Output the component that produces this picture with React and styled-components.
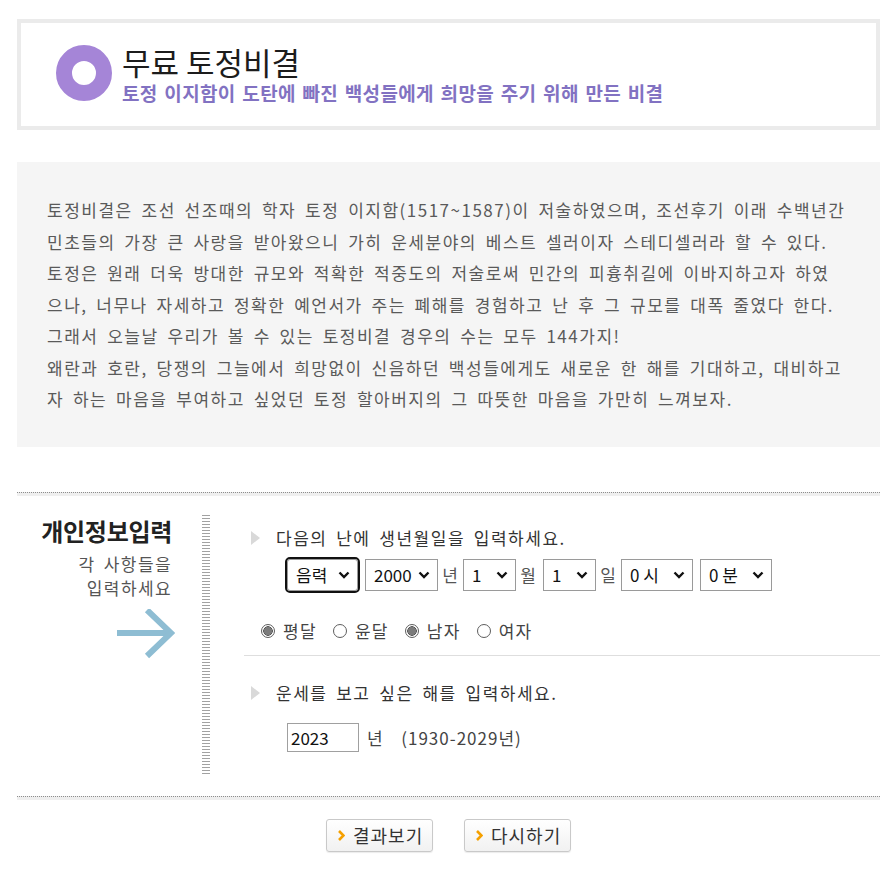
import React from "react";
import styled, { createGlobalStyle } from "styled-components";

const Global = createGlobalStyle`
  html, body { margin: 0; padding: 0; background: #fff; }
  body { font-family: "Noto Sans CJK KR", "Noto Sans", sans-serif; color: #333; }
  * { box-sizing: border-box; }
`;

const chevronSvg = encodeURIComponent(
  '<svg xmlns="http://www.w3.org/2000/svg" width="12" height="8" viewBox="0 0 12 8"><polyline points="1.5,1.5 6,6 10.5,1.5" fill="none" stroke="#111" stroke-width="2.4"/></svg>'
);

const Page = styled.div`
  width: 895px;
  padding: 19px 15px 20px 17px;
`;

const HeaderBox = styled.header`
  height: 111px;
  border: 4px solid #ebebeb;
  display: flex;
  align-items: center;
  padding-left: 35px;
  gap: 10px;
`;

const Ring = styled.div`
  width: 56px;
  height: 56px;
  border-radius: 50%;
  border: 16px solid #a585d7;
  margin-bottom: 4px;
  flex: none;
`;

const TitleBlock = styled.div`
  display: flex;
  flex-direction: column;
`;

const Title = styled.h1`
  margin: 0;
  font-size: 31px;
  line-height: 32px;
  font-weight: 400;
  color: #1c1c1c;
`;

const Subtitle = styled.p`
  margin: 4px 0 0;
  font-size: 19px;
  line-height: 22px;
  font-weight: 700;
  color: #8272c2;
  letter-spacing: 0.35px;
  word-spacing: 2px;
`;

const IntroBox = styled.section`
  margin-top: 32px;
  background: #f5f5f5;
  padding: 32px 0 32px 30px;
  font-size: 17px;
  line-height: 31.5px;
  letter-spacing: 1.5px;
  word-spacing: 3.5px;
  color: #5a5a5a;
`;

const Line = styled.span`
  display: block;
  white-space: nowrap;
`;

const Divider = styled.div`
  height: 4px;
  border-top: 1px dotted #8d8d8d;
  background: #efefef;
  margin-top: ${(p) => p.$top || 0}px;
`;

const FormRow = styled.div`
  display: flex;
  padding: 19px 0 20px;
`;

const SideCol = styled.div`
  width: 173px;
  padding-right: 18px;
  text-align: right;
  display: flex;
  flex-direction: column;
  align-items: flex-end;
`;

const SideTitle = styled.h2`
  margin: 1px 0 0;
  font-size: 24px;
  line-height: 30px;
  font-weight: 700;
  color: #222;
  letter-spacing: -0.3px;
`;

const SideText = styled.p`
  margin: 6px 0 0;
  font-size: 17px;
  line-height: 24px;
  letter-spacing: 1.4px;
  word-spacing: 3px;
  color: #555;
`;

const ArrowWrap = styled.div`
  margin-top: 9px;
  margin-right: -3px;
  width: 58px;
  height: 50px;
`;

const Stripes = styled.div`
  margin-left: 12px;
  width: 8px;
  height: 261px;
  background: repeating-linear-gradient(
    to bottom,
    #a2a2a2 0 1px,
    #ffffff 1px 3px
  );
  flex: none;
`;

const MainCol = styled.div`
  margin-left: 34px;
  flex: 1;
  display: flex;
  flex-direction: column;
`;

const Question = styled.div`
  display: flex;
  align-items: center;
  margin-top: ${(p) => p.$top}px;
  padding-left: 7px;
  height: 24px;
  font-size: 17px;
  letter-spacing: 1.5px;
  word-spacing: 3.5px;
  color: #333;
  gap: 16px;
`;

const Triangle = styled.span`
  width: 0;
  height: 0;
  border-left: 9px solid #d9d9d9;
  border-top: 7px solid transparent;
  border-bottom: 7px solid transparent;
`;

const FieldRow = styled.div`
  display: flex;
  align-items: center;
  margin-top: ${(p) => p.$top}px;
  padding-left: 43px;
  height: ${(p) => p.$h}px;
  font-size: 17px;
  color: #444;
`;

const Select = styled.select`
  appearance: none;
  width: ${(p) => p.$w}px;
  height: 32px;
  margin-right: ${(p) => p.$mr || 0}px;
  font-family: "Noto Sans CJK KR", sans-serif;
  font-size: 17px;
  color: #111;
  background: #fff url("data:image/svg+xml,${chevronSvg}") no-repeat right 7px center;
  border: 1px solid #9a9a9a;
  border-radius: ${(p) => (p.$focused ? "3px" : "0")};
  padding: 0 20px 0 8px;
  outline: ${(p) => (p.$focused ? "2px solid #111" : "none")};
  outline-offset: 0;
`;

const Unit = styled.span`
  width: 20px;
  text-align: center;
  margin: 0 ${(p) => p.$mr || 2}px 0 2px;
  color: #555;
  font-size: 17px;
`;

const RadioRow = styled.div`
  display: flex;
  align-items: center;
  margin-top: 28px;
  padding-left: 17px;
  height: 24px;
  font-size: 17px;
  letter-spacing: 1.3px;
  color: #444;
`;

const RadioLabel = styled.label`
  display: flex;
  align-items: center;
  gap: 8px;
  margin-right: 16px;
`;

const Radio = styled.input`
  appearance: none;
  margin: 0;
  width: 14px;
  height: 14px;
  border-radius: 50%;
  border: 1px solid #5e5e5e;
  background: ${(p) =>
    p.checked
      ? "radial-gradient(circle, #7b7b7b 0 3.8px, #555 4px 4.5px, #fff 5px)"
      : "#fff"};
`;

const Rule = styled.div`
  margin-top: 12px;
  height: 1px;
  background: #dedede;
`;

const YearInput = styled.input`
  width: 72px;
  height: 29px;
  border: 1px solid #a0a0a0;
  padding: 0 3px;
  font-family: "Noto Sans CJK KR", sans-serif;
  font-size: 17px;
  color: #111;
  margin-right: 8px;
`;

const Hint = styled.span`
  color: #444;
  letter-spacing: 1px;
  word-spacing: 4px;
`;

const Buttons = styled.div`
  display: flex;
  justify-content: center;
  gap: 31px;
  margin-top: 19px;
`;

const Button = styled.button`
  width: 107px;
  height: 33px;
  display: flex;
  align-items: center;
  gap: 8px;
  padding: 0 0 0 11px;
  border: 1px solid #c9c9c9;
  border-radius: 3px;
  background: linear-gradient(to bottom, #ffffff, #f1f1f1);
  box-shadow: 0 1px 1px rgba(0, 0, 0, 0.08);
  font-family: "Noto Sans CJK KR", sans-serif;
  font-size: 18px;
  letter-spacing: 1px;
  color: #333;
  cursor: pointer;
`;

const Chevron = () => (
  <svg width="7" height="11" viewBox="0 0 7 11">
    <polyline points="1,1 5.5,5.5 1,10" fill="none" stroke="#f5a000" strokeWidth="2.6" />
  </svg>
);

const Arrow = () => (
  <svg width="58" height="50" viewBox="0 0 58 50">
    <g stroke="#8ebdd3" strokeWidth="6" fill="none">
      <line x1="0" y1="24" x2="54" y2="24" />
      <polyline points="30,1 54,24 30,47" strokeLinejoin="miter" />
    </g>
  </svg>
);

const lines = [
  "토정비결은 조선 선조때의 학자 토정 이지함(1517~1587)이 저술하였으며, 조선후기 이래 수백년간",
  "민초들의 가장 큰 사랑을 받아왔으니 가히 운세분야의 베스트 셀러이자 스테디셀러라 할 수 있다.",
  "토정은 원래 더욱 방대한 규모와 적확한 적중도의 저술로써 민간의 피흉취길에 이바지하고자 하였",
  "으나, 너무나 자세하고 정확한 예언서가 주는 폐해를 경험하고 난 후 그 규모를 대폭 줄였다 한다.",
  "그래서 오늘날 우리가 볼 수 있는 토정비결 경우의 수는 모두 144가지!",
  "왜란과 호란, 당쟁의 그늘에서 희망없이 신음하던 백성들에게도 새로운 한 해를 기대하고, 대비하고",
  "자 하는 마음을 부여하고 싶었던 토정 할아버지의 그 따뜻한 마음을 가만히 느껴보자.",
];

const range = (a, b) => Array.from({ length: b - a + 1 }, (_, i) => a + i);

export default function App() {
  return (
    <>
      <Global />
      <Page>
        <HeaderBox>
          <Ring />
          <TitleBlock>
            <Title>무료 토정비결</Title>
            <Subtitle>토정 이지함이 도탄에 빠진 백성들에게 희망을 주기 위해 만든 비결</Subtitle>
          </TitleBlock>
        </HeaderBox>

        <IntroBox>
          {lines.map((l) => (
            <Line key={l}>{l}</Line>
          ))}
        </IntroBox>

        <Divider $top={45} />
        <FormRow>
          <SideCol>
            <SideTitle>개인정보입력</SideTitle>
            <SideText>
              각 사항들을
              <br />
              입력하세요
            </SideText>
            <ArrowWrap>
              <Arrow />
            </ArrowWrap>
          </SideCol>
          <Stripes />
          <MainCol>
            <Question $top={11}>
              <Triangle />
              다음의 난에 생년월일을 입력하세요.
            </Question>
            <FieldRow $top={9} $h={32}>
              <Select $w={71} $mr={7} $focused defaultValue="음력">
                <option>음력</option>
                <option>양력</option>
              </Select>
              <Select $w={73} defaultValue="2000">
                {range(1930, 2029).map((y) => (
                  <option key={y}>{y}</option>
                ))}
              </Select>
              <Unit $mr={3}>년</Unit>
              <Select $w={53} defaultValue="1">
                {range(1, 12).map((m) => (
                  <option key={m}>{m}</option>
                ))}
              </Select>
              <Unit $mr={5}>월</Unit>
              <Select $w={53} defaultValue="1">
                {range(1, 31).map((d) => (
                  <option key={d}>{d}</option>
                ))}
              </Select>
              <Unit $mr={3}>일</Unit>
              <Select $w={72} $mr={7} defaultValue="0 시">
                {range(0, 23).map((h) => (
                  <option key={h}>{h} 시</option>
                ))}
              </Select>
              <Select $w={72} defaultValue="0 분">
                {range(0, 59).map((m) => (
                  <option key={m}>{m} 분</option>
                ))}
              </Select>
            </FieldRow>
            <RadioRow>
              <RadioLabel>
                <Radio type="radio" name="moon" checked readOnly />
                평달
              </RadioLabel>
              <RadioLabel>
                <Radio type="radio" name="moon" checked={false} readOnly />
                윤달
              </RadioLabel>
              <RadioLabel>
                <Radio type="radio" name="sex" checked readOnly />
                남자
              </RadioLabel>
              <RadioLabel>
                <Radio type="radio" name="sex" checked={false} readOnly />
                여자
              </RadioLabel>
            </RadioRow>
            <Rule />
            <Question $top={25}>
              <Triangle />
              운세를 보고 싶은 해를 입력하세요.
            </Question>
            <FieldRow $top={18} $h={29}>
              <YearInput defaultValue="2023" />
              <Hint>년 &nbsp;(1930-2029년)</Hint>
            </FieldRow>
          </MainCol>
        </FormRow>
        <Divider />

        <Buttons>
          <Button type="button">
            <Chevron />
            결과보기
          </Button>
          <Button type="button">
            <Chevron />
            다시하기
          </Button>
        </Buttons>
      </Page>
    </>
  );
}
